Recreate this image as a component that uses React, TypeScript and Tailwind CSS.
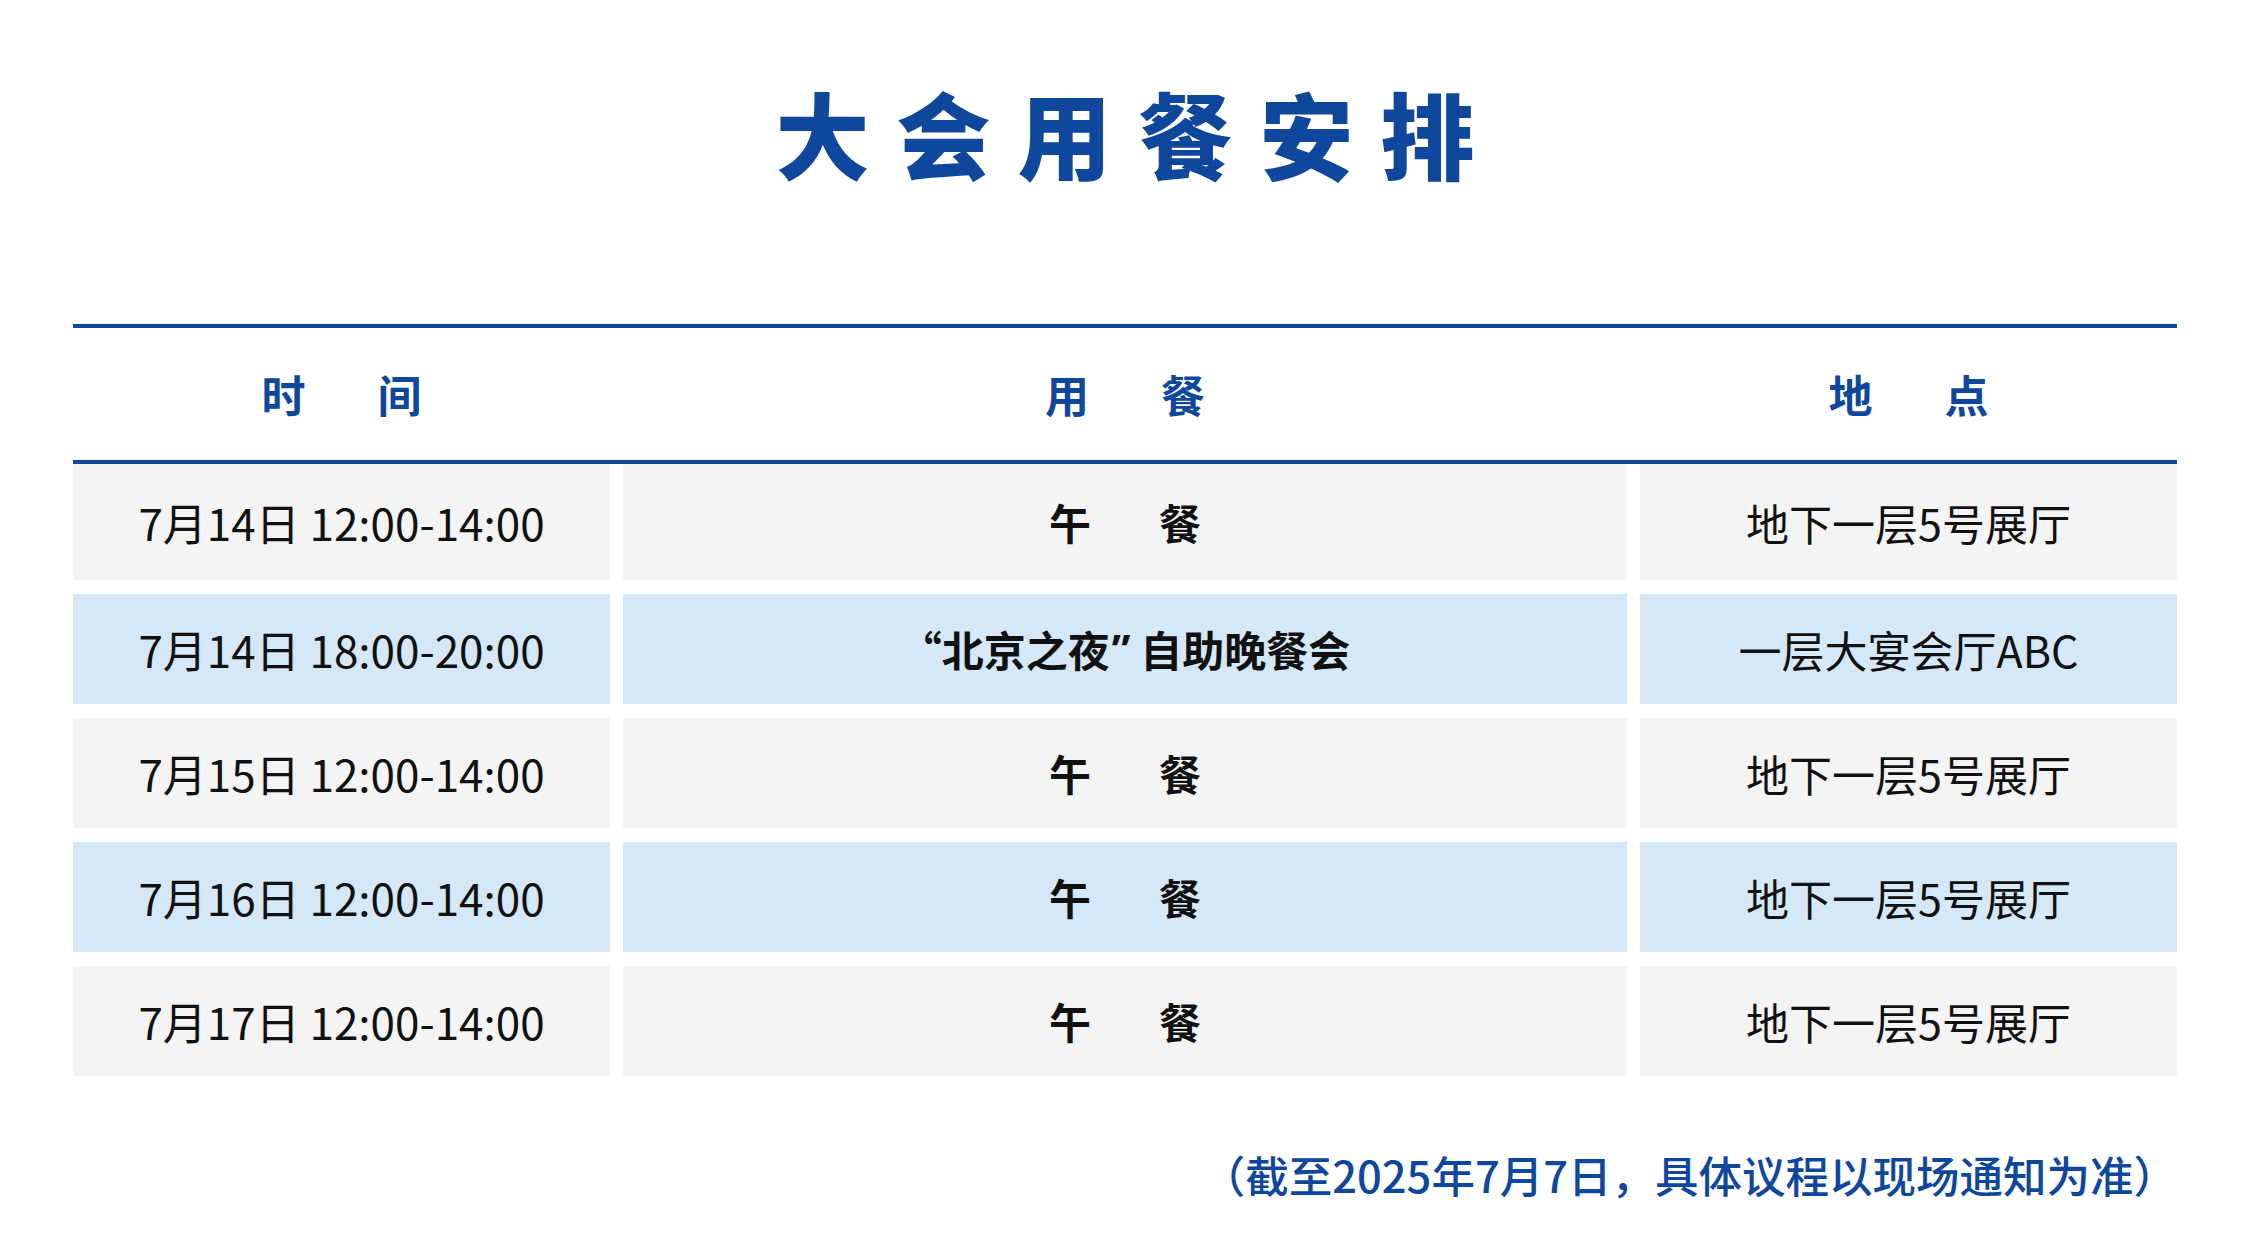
import React from "react";

type MealRow = {
  time: string;
  meal: React.ReactNode;
  place: string;
  tone: "gray" | "blue";
};

const lunch = (
  <span className="flex gap-[68px]">
    <span>午</span>
    <span>餐</span>
  </span>
);

const rows: MealRow[] = [
  { time: "7月14日 12:00-14:00", meal: lunch, place: "地下一层5号展厅", tone: "gray" },
  {
    time: "7月14日 18:00-20:00",
    meal: (
      <span className="flex items-center">
        <span>“北京之夜</span>
        <span className="ml-[2px] mr-[10px] font-['Noto_Sans',sans-serif]">”</span>
        <span>自助晚餐会</span>
      </span>
    ),
    place: "一层大宴会厅ABC",
    tone: "blue",
  },
  { time: "7月15日 12:00-14:00", meal: lunch, place: "地下一层5号展厅", tone: "gray" },
  { time: "7月16日 12:00-14:00", meal: lunch, place: "地下一层5号展厅", tone: "blue" },
  { time: "7月17日 12:00-14:00", meal: lunch, place: "地下一层5号展厅", tone: "gray" },
];

const title = ["大", "会", "用", "餐", "安", "排"];

export default function App() {
  return (
    <div
      className="h-[1255px] w-[2250px] overflow-hidden bg-white text-[#111]"
      style={{ fontFamily: '"Noto Sans CJK SC", "Noto Sans", sans-serif' }}
    >
      <h1 className="flex justify-center gap-[27px] pt-[85px] text-[94px] font-black leading-none text-[#0e479c]">
        {title.map((ch) => (
          <span key={ch}>{ch}</span>
        ))}
      </h1>

      <div className="mx-[73px] mt-[145px]">
        <div className="grid h-[140px] grid-cols-[537px_1004px_537px] gap-x-[13px] border-y-4 border-[#0e479c]">
          <Head a="时" b="间" />
          <Head a="用" b="餐" />
          <Head a="地" b="点" />
        </div>

        <div className="flex flex-col gap-[14px]">
          {rows.map((row, i) => (
            <Row key={i} row={row} first={i === 0} />
          ))}
        </div>

        <p className="mt-[74px] text-right text-[43.5px] font-medium leading-[50px] text-[#0e479c]">
          （截至2025年7月7日，具体议程以现场通知为准）
        </p>
      </div>
    </div>
  );
}

function Head({ a, b }: { a: string; b: string }) {
  return (
    <div className="flex items-center justify-center gap-[72px] text-[44px] font-bold leading-none text-[#0e479c]">
      <span>{a}</span>
      <span>{b}</span>
    </div>
  );
}

function Row({ row, first }: { row: MealRow; first: boolean }) {
  const bg = row.tone === "blue" ? "bg-[#d5e8f7]" : "bg-[#f4f4f4]";
  const height = first ? "h-[116px]" : "h-[110px]";
  return (
    <div className={`grid grid-cols-[537px_1004px_537px] gap-x-[13px] leading-none ${height}`}>
      <div className={`flex items-center justify-center text-[44px] ${bg}`}>{row.time}</div>
      <div className={`flex items-center justify-center text-[42px] font-bold ${bg}`}>{row.meal}</div>
      <div className={`flex items-center justify-center text-[43px] ${bg}`}>{row.place}</div>
    </div>
  );
}
